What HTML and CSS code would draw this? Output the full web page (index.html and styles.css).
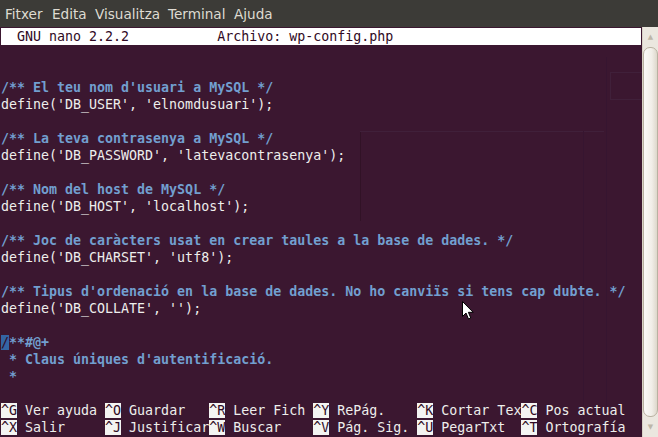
FILE: index.html
```html
<!DOCTYPE html>
<html>
<head>
<meta charset="utf-8">
<link rel="stylesheet" href="styles.css">
</head>
<body>
<div class="window">
  <div class="menubar">
    <span class="menu m1">Fitxer</span>
    <span class="menu m2">Edita</span>
    <span class="menu m3">Visualitza</span>
    <span class="menu m4">Terminal</span>
    <span class="menu m5">Ajuda</span>
  </div>
  <div class="body">
    <div class="term">
      <div class="ghost">
        <div class="g-vline g1"></div>
        <div class="g-hline g2"></div>
        <div class="g-vline g3"></div>
        <div class="g-vline g4"></div>
        <div class="g-box g5"></div>
      </div>
      <div class="row title">  GNU nano 2.2.2           Archivo: wp-config.php                             </div>
      <div class="row"> </div>
      <div class="row"> </div>
      <div class="row"><span class="c">/** El teu nom d'usuari a MySQL */</span></div>
      <div class="row">define('DB_USER', 'elnomdusuari');</div>
      <div class="row"> </div>
      <div class="row"><span class="c">/** La teva contrasenya a MySQL */</span></div>
      <div class="row">define('DB_PASSWORD', 'latevacontrasenya');</div>
      <div class="row"> </div>
      <div class="row"><span class="c">/** Nom del host de MySQL */</span></div>
      <div class="row">define('DB_HOST', 'localhost');</div>
      <div class="row"> </div>
      <div class="row"><span class="c">/** Joc de caràcters usat en crear taules a la base de dades. */</span></div>
      <div class="row">define('DB_CHARSET', 'utf8');</div>
      <div class="row"> </div>
      <div class="row"><span class="c">/** Tipus d'ordenació en la base de dades. No ho canviïs si tens cap dubte. */</span></div>
      <div class="row">define('DB_COLLATE', '');</div>
      <div class="row"> </div>
      <div class="row"><span class="cursor">/</span><span class="c">**#@+</span></div>
      <div class="row"><span class="c"> * Claus úniques d'autentificació.</span></div>
      <div class="row"><span class="c"> *</span></div>
      <div class="row"> </div>
      <div class="row"><span class="k">^G</span> Ver ayuda <span class="k">^O</span> Guardar   <span class="k">^R</span> Leer Fich <span class="k">^Y</span> RePág.    <span class="k">^K</span> Cortar Tex<span class="k">^C</span> Pos actual</div>
      <div class="row"><span class="k">^X</span> Salir     <span class="k">^J</span> Justificar<span class="k">^W</span> Buscar    <span class="k">^V</span> Pág. Sig. <span class="k">^U</span> PegarTxt  <span class="k">^T</span> Ortografía</div>
      <svg class="pointer" width="12" height="19" viewBox="0 0 12 19">
        <path d="M0.5 0.5 L0.5 15.5 L4 12 L6.5 18 L8.8 17 L6.4 11.3 L11.2 11.3 Z" fill="#ffffff" stroke="#000000" stroke-width="1"/>
      </svg>
    </div>
    <div class="scrollbar">
      <div class="arrow">▲</div>
      <div class="thumb"></div>
      <div class="arrow">▼</div>
    </div>
  </div>
</div>
</body>
</html>
```

FILE: styles.css
```css
* { box-sizing: border-box; }
html, body {
  margin: 0;
  padding: 0;
  width: 658px;
  height: 437px;
  overflow: hidden;
  background: #3b1730;
}
.window {
  width: 658px;
  height: 437px;
  display: flex;
  flex-direction: column;
}
.menubar {
  height: 27px;
  flex: none;
  background: #3c3b37;
  display: flex;
  align-items: center;
  padding-left: 5px;
  font-family: "DejaVu Sans", sans-serif;
  font-size: 13.6px;
  color: #dfdbd2;
}
.menu { display: block; }
.m1 { width: 47px; }
.m2 { width: 43px; }
.m3 { width: 73px; }
.m4 { width: 66px; }
.body {
  flex: 1;
  display: flex;
  min-height: 0;
}
.term {
  position: relative;
  width: 642px;
  flex: none;
  background: #3b1730;
  padding: 1px 0 0 1px;
  border-left: 0;
  font-family: "DejaVu Sans Mono", monospace;
  font-size: 13.3px;
  color: #eeeeec;
  overflow: hidden;
}
.row {
  position: relative;
  height: 17px;
  line-height: 17px;
  white-space: pre;
}
.title {
  background: #ffffff;
  color: #300a24;
  width: 640px;
}
.c {
  color: #729fcf;
  font-weight: bold;
}
.cursor {
  background: #3465a4;
  color: #300a24;
}
.k {
  background: #f4f4f2;
  color: #300a24;
}
.pointer {
  position: absolute;
  left: 462px;
  top: 274px;
}
.ghost {
  position: absolute;
  inset: 0;
  pointer-events: none;
}
.g-vline, .g-hline, .g-box {
  position: absolute;
}
.g1 { left: 360px; top: 104px; width: 1px; height: 90px; background: #311226; }
.g2 { left: 360px; top: 104px; width: 244px; height: 1px; background: #40203a; }
.g3 { left: 606px; top: 30px; width: 1px; height: 360px; background: #361530; }
.g4 { left: 583px; top: 104px; width: 1px; height: 290px; background: #361530; }
.g5 { left: 610px; top: 45px; width: 32px; height: 28px; border: 1px solid #40203a; border-right: 0; }
.scrollbar {
  width: 16px;
  flex: none;
  background: #ebe7df;
  border-left: 1px solid #d8d2c6;
  display: flex;
  flex-direction: column;
  align-items: center;
}
.arrow {
  height: 20px;
  flex: none;
  font-family: "DejaVu Sans", sans-serif;
  font-size: 7px;
  line-height: 20px;
  color: #bdb6a8;
}
.thumb {
  flex: 1;
  width: 15px;
  border: 1px solid #b9b1a1;
  border-radius: 7px;
  background: linear-gradient(to right, #fbfaf8, #f1eee8 60%, #ddd7cb);
}
```
